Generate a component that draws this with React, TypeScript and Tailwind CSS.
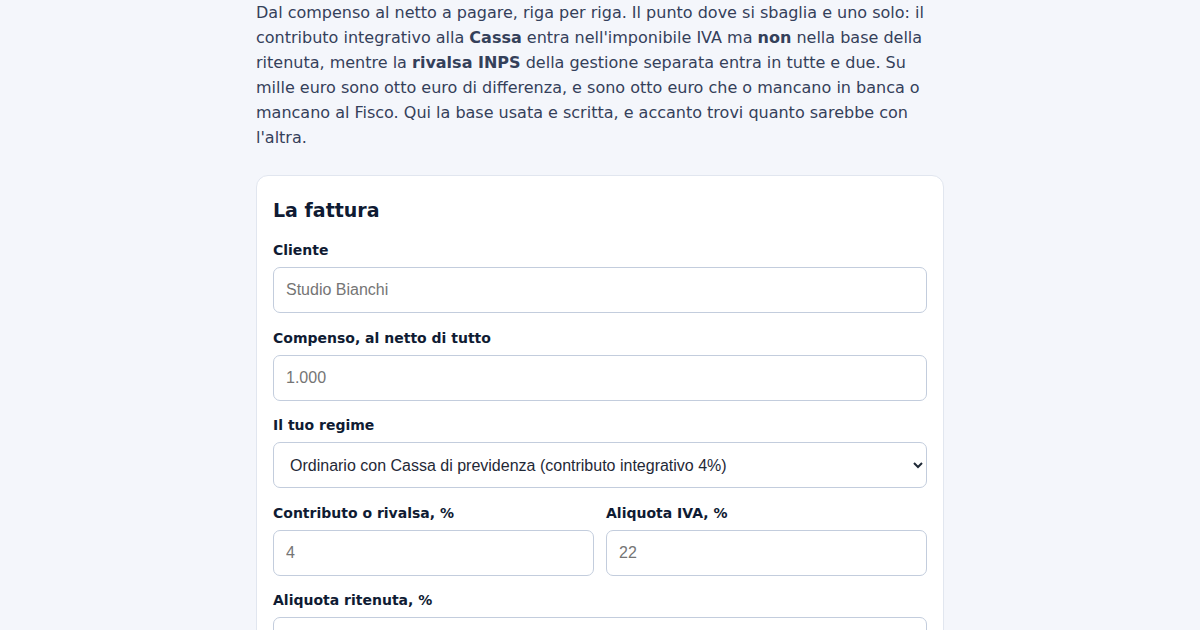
const label = "block text-[14px] font-bold leading-[22px] text-[#0f1b33] mb-[6px]"
const input =
  "block w-full h-[46px] rounded-[7px] border border-[#c3cddd] bg-white px-[12px] font-['Liberation_Sans',Arial,sans-serif] text-[16px] text-[#1f2937] placeholder:text-[#757575] outline-none"

function Field({ name, placeholder }: { name: string; placeholder: string }) {
  return (
    <div>
      <label className={label}>{name}</label>
      <input className={input} placeholder={placeholder} />
    </div>
  )
}

export default function App() {
  return (
    <div className="min-h-screen bg-[#f4f6fb] font-['DejaVu_Sans',sans-serif]">
      <main className="mx-auto w-[688px]">
        {/* line breaks kept as in the original copy */}
        <p className="w-[704px] text-[16px] leading-[25px] text-[#34405a] mb-[25px]">
          Dal compenso al netto a pagare, riga per riga. Il punto dove si sbaglia e uno solo: il contributo
          integrativo alla <b>Cassa</b> entra nell'imponibile IVA ma <b>non</b> nella base della ritenuta, mentre
          la <b>rivalsa INPS</b> della gestione separata entra in tutte e due. Su
          <br />
          mille euro sono otto euro di differenza, e sono otto euro che o mancano in banca o
          <br />
          mancano al Fisco. Qui la base usata e scritta, e accanto trovi quanto sarebbe con
          <br />
          l'altra.
        </p>

        <section className="rounded-[12px] border border-[#e1e6ef] bg-white p-4">
          <h2 className="mt-[4px] mb-[15px] text-[19px] font-bold leading-[28px] text-[#0f1b33]">La fattura</h2>
          <div className="flex flex-col gap-[13.5px]">
            <Field name="Cliente" placeholder="Studio Bianchi" />
            <Field name="Compenso, al netto di tutto" placeholder="1.000" />
            <div>
              <label className={label}>Il tuo regime</label>
              <select className={input} defaultValue="cassa">
                <option value="cassa">Ordinario con Cassa di previdenza (contributo integrativo 4%)</option>
                <option value="inps">Ordinario con rivalsa INPS 4%</option>
              </select>
            </div>
            <div className="grid grid-cols-2 gap-3">
              <Field name="Contributo o rivalsa, %" placeholder="4" />
              <Field name="Aliquota IVA, %" placeholder="22" />
            </div>
            <Field name="Aliquota ritenuta, %" placeholder="20" />
          </div>
        </section>
      </main>
    </div>
  )
}
